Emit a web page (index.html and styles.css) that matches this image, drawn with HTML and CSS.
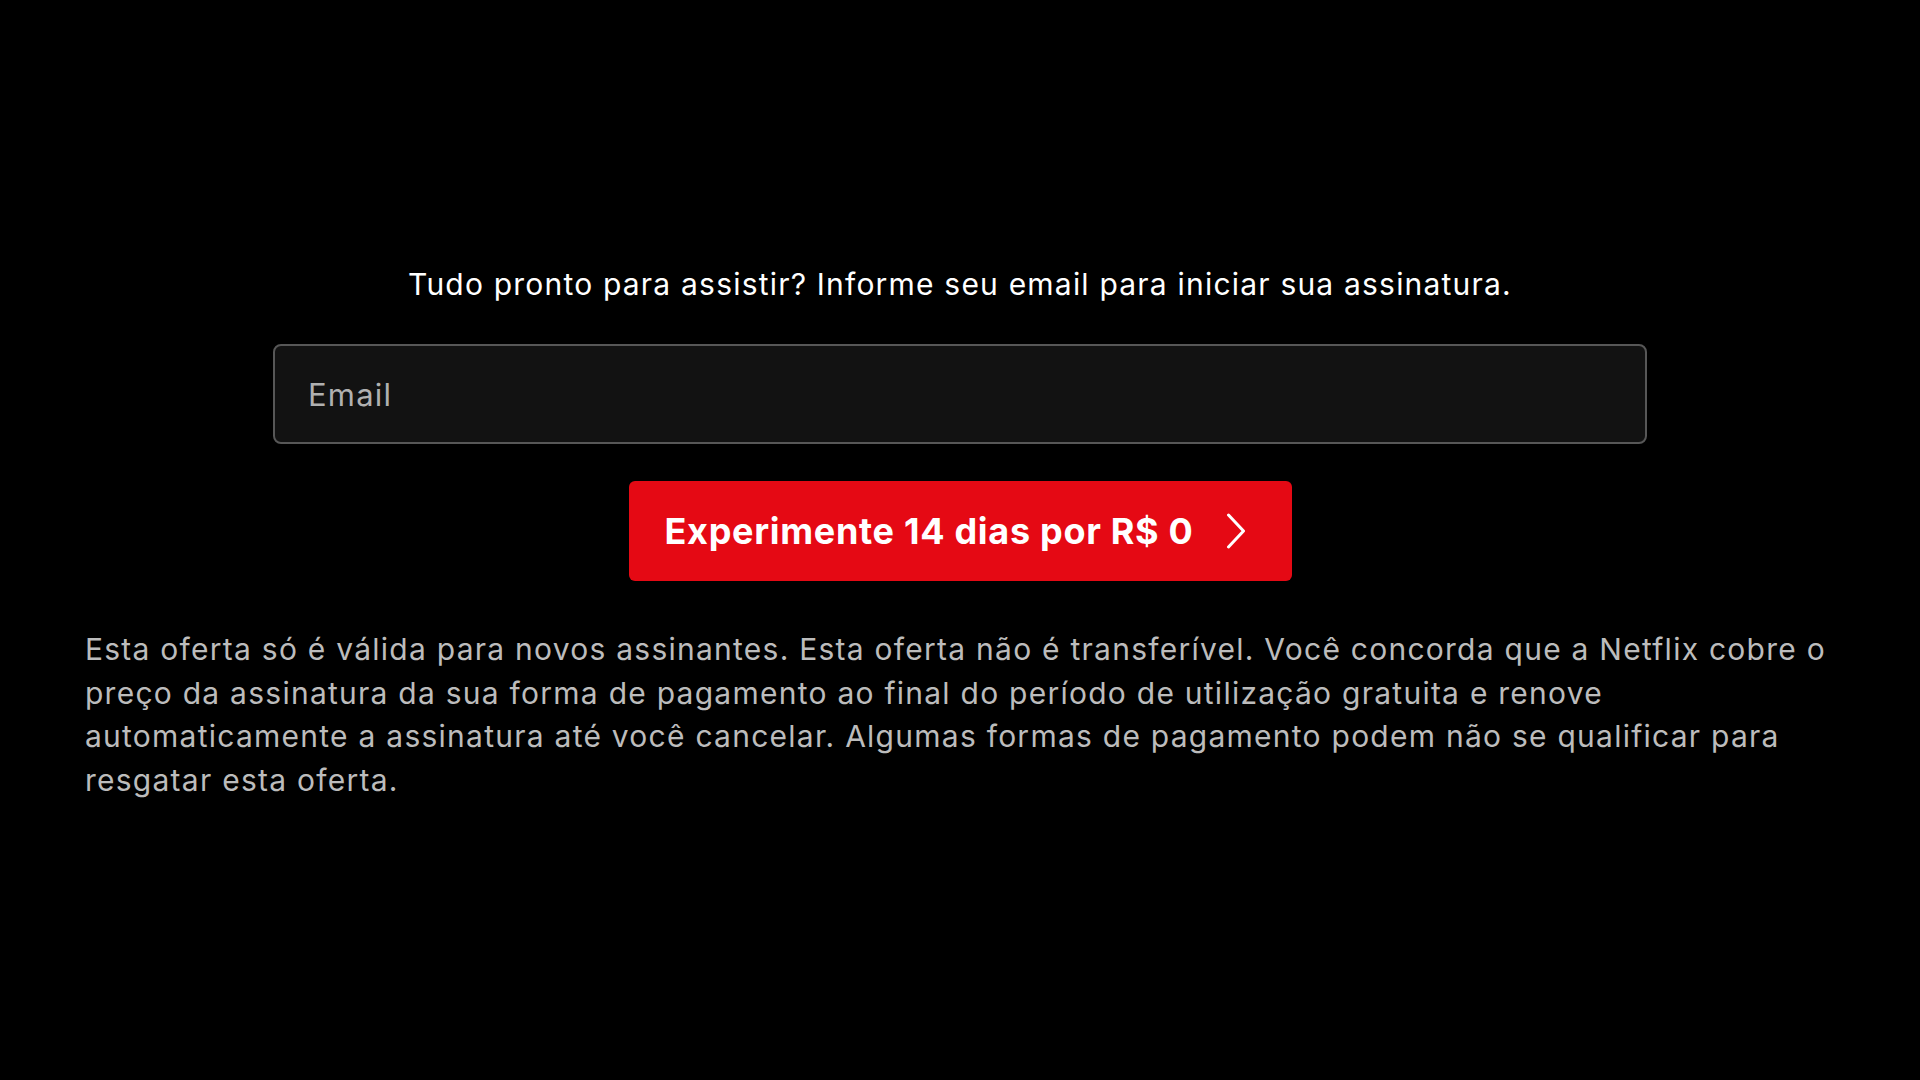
FILE: index.html
```html
<!DOCTYPE html>
<html lang="pt-BR">
<head>
  <meta charset="UTF-8">
  <meta name="viewport" content="width=device-width, initial-scale=1.0">
  <title>Netflix</title>
  <link rel="stylesheet" href="styles.css">
</head>
<body>
  <main class="signup">
    <h3 class="signup-title">Tudo pronto para assistir? Informe seu email para iniciar sua assinatura.</h3>

    <form class="signup-form" onsubmit="return false">
      <input class="email-input" type="email" placeholder="Email" autocomplete="off">
      <button class="cta-button" type="submit">
        Experimente 14 dias por R$ 0
        <svg class="cta-chevron" viewBox="0 0 20 36" width="20" height="36" aria-hidden="true">
          <path d="M2.5 2 L17.5 18 L2.5 34" fill="none" stroke="#fff" stroke-width="3" stroke-linecap="round" stroke-linejoin="round"/>
        </svg>
      </button>
    </form>

    <p class="offer-terms">Esta oferta só é válida para novos assinantes. Esta oferta não é transferível. Você concorda que a Netflix cobre o preço da assinatura da sua forma de pagamento ao final do período de utilização gratuita e renove automaticamente a assinatura até você cancelar. Algumas formas de pagamento podem não se qualificar para resgatar esta oferta.</p>
  </main>
</body>
</html>
```

FILE: styles.css
```css
body {
  font-family: Inter, Roboto, 'Liberation Sans', Arial, sans-serif;
  margin: 0;
  padding: 0;
  background-color: #000;
  color: #fff;
  min-height: 100vh;
}

.signup {
  display: flex;
  flex-direction: column;
  align-items: center;
  padding: 265px 85px 0;
}

.signup-title {
  margin: 0;
  font-size: 30px;
  font-weight: 400;
  line-height: 39px;
  letter-spacing: 1.2px;
  text-align: center;
  color: #fff;
}

.signup-form {
  display: flex;
  flex-direction: column;
  align-items: center;
  width: 100%;
  margin-top: 40px;
}

.email-input {
  box-sizing: border-box;
  width: 1374px;
  height: 100px;
  padding: 0 33px;
  background-color: #121212;
  border: 2px solid #575757;
  border-radius: 8px;
  color: #fff;
  font-family: inherit;
  font-size: 31px;
  letter-spacing: 1.2px;
  outline: none;
}

.email-input::placeholder {
  color: #b0b0b0;
}

.cta-button {
  display: flex;
  align-items: center;
  justify-content: space-between;
  box-sizing: border-box;
  width: 663px;
  height: 100px;
  margin-top: 37px;
  padding: 0 46px 0 36px;
  background-color: #e50914;
  border: none;
  border-radius: 6px;
  color: #fff;
  font-family: inherit;
  font-size: 36px;
  font-weight: 700;
  letter-spacing: 0.7px;
  cursor: pointer;
}

.cta-button:hover {
  background-color: #c11119;
}

.cta-chevron {
  flex-shrink: 0;
}

.offer-terms {
  align-self: stretch;
  margin: 47px 0 0;
  font-size: 30px;
  line-height: 43.5px;
  letter-spacing: 1.25px;
  color: #bcbcbc;
}
```
